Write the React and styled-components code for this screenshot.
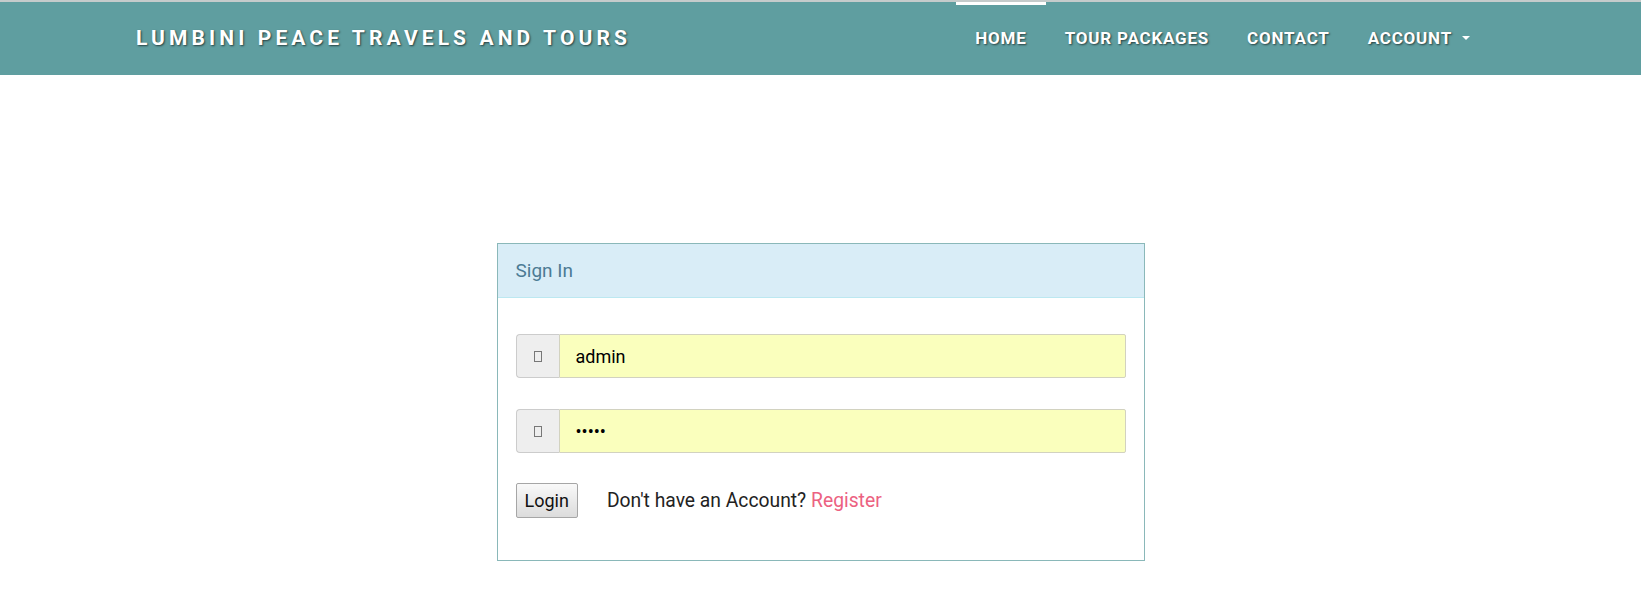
import styled, { createGlobalStyle } from "styled-components"

const GlobalStyle = createGlobalStyle`
    body {
        margin: 0;
        background: #fff;
        font-family: Roboto, "Liberation Sans", sans-serif;
        color: #333;
    }
    `

const Navbar = styled.nav`
    display: flex;
    justify-content: space-between;
    align-items: stretch;
    height: 73px;
    padding: 0 152px 0 136px;
    background: #5f9ea0;
    border-top: 2px solid #c5cbcb;
    `

const Brand = styled.a`
    display: flex;
    align-items: center;
    padding-bottom: 1px;
    color: #fff;
    font-size: 21px;
    font-weight: 700;
    letter-spacing: 4.1px;
    text-transform: uppercase;
    text-decoration: none;
    text-shadow: 1px 1px 2px rgba(0, 0, 0, 0.6);
    `

const NavList = styled.ul`
    display: flex;
    margin: 0;
    padding: 0;
    list-style: none;
    `

const NavItem = styled.li`
    display: flex;
    align-items: center;
    padding: 0 19px;
    border-top: 3px solid ${props => props.$active ? '#fff' : 'transparent'};
    border-bottom: 4px solid transparent;
    `

const NavLink = styled.a`
    display: flex;
    align-items: center;
    color: #fff;
    font-size: 17px;
    font-weight: 700;
    letter-spacing: 0.8px;
    text-transform: uppercase;
    text-decoration: none;
    text-shadow: 1px 1px 2px rgba(0, 0, 0, 0.6);
    `

const Caret = styled.span`
    display: inline-block;
    width: 0;
    height: 0;
    margin-left: 10px;
    border-top: 4px solid #fff;
    border-left: 4px solid transparent;
    border-right: 4px solid transparent;
    `

const Main = styled.main`
    display: flex;
    justify-content: center;
    padding-top: 168px;
    `

const Panel = styled.section`
    width: 648px;
    box-sizing: border-box;
    border: 1px solid #8ab8b9;
    `

const PanelHeading = styled.h3`
    display: flex;
    align-items: center;
    height: 53px;
    margin: 0;
    padding: 0 18px;
    background: #d9edf7;
    border-bottom: 1px solid #bce8f1;
    color: #4c7b94;
    font-size: 19px;
    font-weight: 400;
    `

const PanelBody = styled.form`
    display: flex;
    flex-direction: column;
    gap: 31px;
    padding: 36px 18px 42px;
    `

const InputGroup = styled.div`
    display: flex;
    height: 44px;
    `

const Addon = styled.span`
    display: flex;
    align-items: center;
    justify-content: center;
    width: 43px;
    box-sizing: border-box;
    background: #eee;
    border: 1px solid #ccc;
    border-right: 0;
    border-radius: 4px 0 0 4px;
    `

const MissingGlyph = styled.span`
    width: 8px;
    height: 11px;
    box-sizing: border-box;
    border: 1px solid #777;
    `

const Field = styled.input`
    flex: 1;
    min-width: 0;
    padding: 0 16px;
    background: #faffbd;
    border: 1px solid #d2d2c0;
    border-radius: 0 2px 2px 0;
    color: #000;
    font-family: Roboto, sans-serif;
    font-size: 18px;
    outline: none;
    `

const Actions = styled.div`
    display: flex;
    align-items: center;
    gap: 29px;
    margin-top: -1px;
    `

const LoginButton = styled.button`
    height: 35px;
    padding: 0 8px;
    background: linear-gradient(#f9f9f9, #dcdcdc);
    border: 1px solid #a6a6a6;
    border-radius: 2px;
    color: #111;
    font-family: Roboto, sans-serif;
    font-size: 18px;
    `

const Prompt = styled.p`
    margin: 0;
    font-size: 19.3px;
    color: #222;
    `

const RegisterLink = styled.a`
    color: #ec6181;
    text-decoration: none;
    `

function App() {
    return (
        <>
            <GlobalStyle />
            <Navbar>
                <Brand href="#">Lumbini Peace Travels and Tours</Brand>
                <NavList>
                    <NavItem $active><NavLink href="#">Home</NavLink></NavItem>
                    <NavItem><NavLink href="#">Tour Packages</NavLink></NavItem>
                    <NavItem><NavLink href="#">Contact</NavLink></NavItem>
                    <NavItem><NavLink href="#">Account<Caret /></NavLink></NavItem>
                </NavList>
            </Navbar>
            <Main>
                <Panel>
                    <PanelHeading>Sign In</PanelHeading>
                    <PanelBody onSubmit={e => e.preventDefault()}>
                        <InputGroup>
                            <Addon><MissingGlyph /></Addon>
                            <Field type="text" defaultValue="admin" />
                        </InputGroup>
                        <InputGroup>
                            <Addon><MissingGlyph /></Addon>
                            <Field type="password" defaultValue="admin" />
                        </InputGroup>
                        <Actions>
                            <LoginButton type="submit">Login</LoginButton>
                            <Prompt>Don't have an Account? <RegisterLink href="#">Register</RegisterLink></Prompt>
                        </Actions>
                    </PanelBody>
                </Panel>
            </Main>
        </>
    )
}

export default App
